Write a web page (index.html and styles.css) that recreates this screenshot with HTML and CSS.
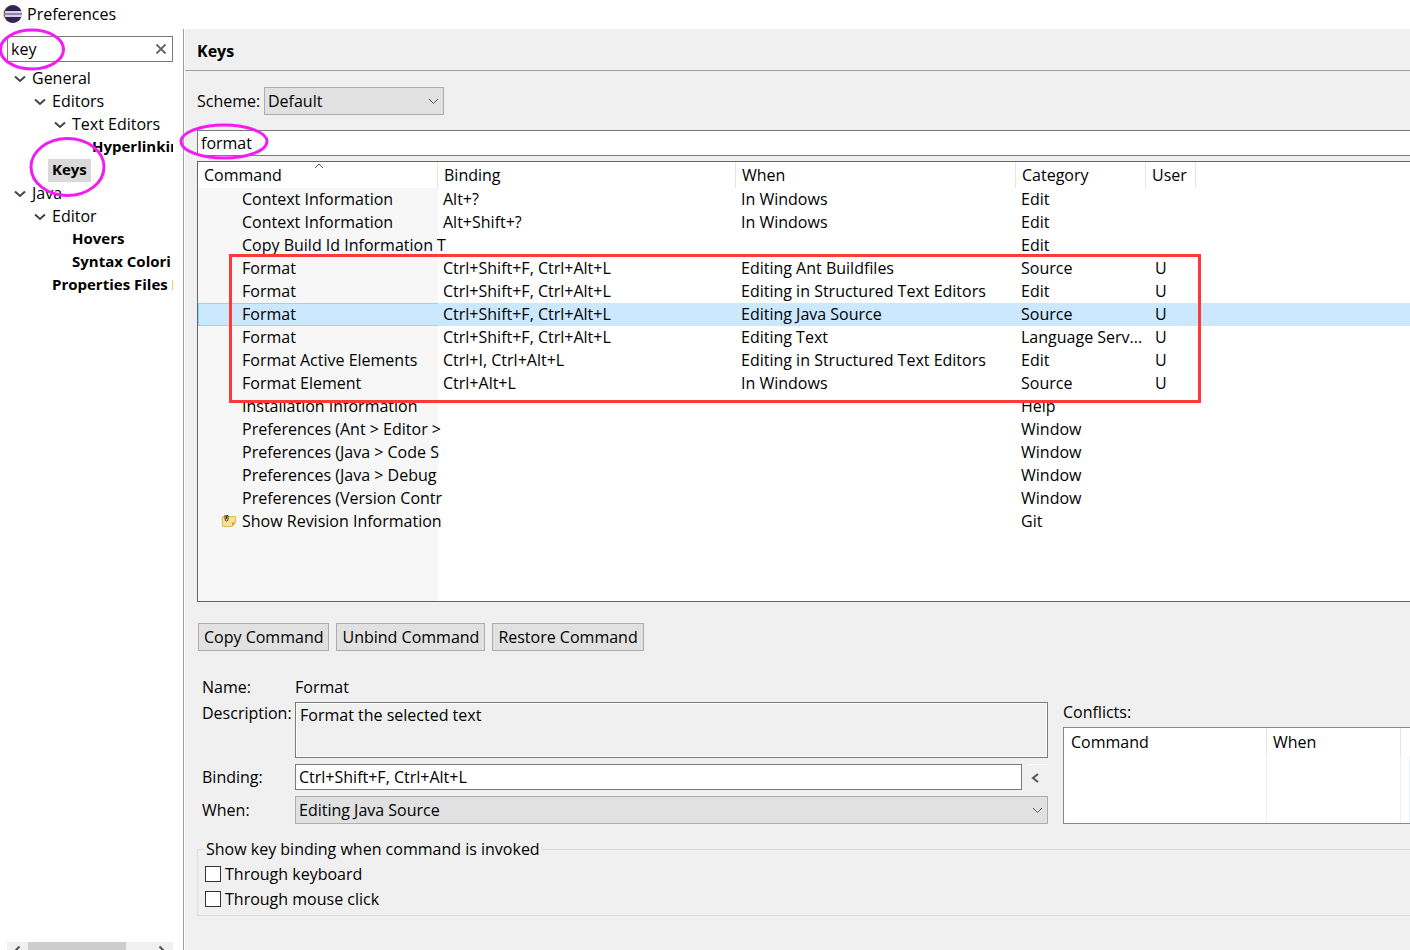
FILE: index.html
```html
<!DOCTYPE html>
<html lang="en">
<head>
  <meta charset="UTF-8" />
  <meta name="viewport" content="width=device-width, initial-scale=1.0"/>
  <title>Preferences</title>
  <link rel="stylesheet" href="styles.css">
</head>
<body>
  <header class="titlebar">
    <svg class="logo" width="20" height="20" viewBox="0 0 20 20">
      <circle cx="10" cy="10" r="9" fill="#f3b57a"/>
      <circle cx="11" cy="10" r="9" fill="#2f2459"/>
      <path d="M3 8h17M3 12h17" stroke="#d5d2e2" stroke-width="2"/>
      <path d="M2 10h18" stroke="#8d87ae" stroke-width="2"/>
    </svg>
    <span>Preferences</span>
  </header>

  <div class="window">
    <aside class="sidebar">
      <div class="search">
        <input type="text" aria-label="Filter preferences" value="key">
        <button class="clear" aria-label="Clear">
          <svg width="12" height="12" viewBox="0 0 12 12"><path d="M1.500 1.500l9 9M10.500 1.500l-9 9" stroke="#666" stroke-width="1.800"/></svg>
        </button>
      </div>

      <ul class="tree">
        <li>
          <div class="node"><button class="twisty" aria-label="Collapse General"><svg width="12" height="8" viewBox="0 0 12 8"><path d="M1 1.5l5 4.5 5-4.5"/></svg></button><span>General</span></div>
          <ul>
            <li>
              <div class="node"><button class="twisty" aria-label="Collapse Editors"><svg width="12" height="8" viewBox="0 0 12 8"><path d="M1 1.5l5 4.5 5-4.5"/></svg></button><span>Editors</span></div>
              <ul>
                <li>
                  <div class="node"><button class="twisty" aria-label="Collapse Text Editors"><svg width="12" height="8" viewBox="0 0 12 8"><path d="M1 1.5l5 4.5 5-4.5"/></svg></button><span>Text Editors</span></div>
                  <ul>
                    <li><div class="node leaf"><span>Hyperlinkin</span></div></li>
                  </ul>
                </li>
              </ul>
            </li>
            <li><div class="node leaf"><span class="current">Keys</span></div></li>
          </ul>
        </li>
        <li>
          <div class="node"><button class="twisty" aria-label="Collapse Java"><svg width="12" height="8" viewBox="0 0 12 8"><path d="M1 1.5l5 4.5 5-4.5"/></svg></button><span>Java</span></div>
          <ul>
            <li>
              <div class="node"><button class="twisty" aria-label="Collapse Editor"><svg width="12" height="8" viewBox="0 0 12 8"><path d="M1 1.5l5 4.5 5-4.5"/></svg></button><span>Editor</span></div>
              <ul>
                <li><div class="node leaf"><span>Hovers</span></div></li>
                <li><div class="node leaf"><span>Syntax Colori</span></div></li>
              </ul>
            </li>
            <li><div class="node leaf"><span>Properties Files E</span></div></li>
          </ul>
        </li>
      </ul>

      <div class="scrollbar">
        <svg width="21" height="17" viewBox="0 0 21 17"><path d="M12.5 4.5l-4 4 4 4" /></svg>
        <div class="thumb"></div>
        <svg width="21" height="17" viewBox="0 0 21 17"><path d="M7.500 4.500l4 4-4 4" /></svg>
      </div>
    </aside>

    <main class="page">
      <h1>Keys</h1>

      <div class="content">
        <div class="scheme">
          <label for="scheme">Scheme:</label>
          <div class="combo">
            <select id="scheme"><option>Default</option></select>
            <svg width="11" height="7" viewBox="0 0 11 7"><path d="M1 1l4.500 4.500 4.500-4.500"/></svg>
          </div>
        </div>

        <input class="filter" type="text" aria-label="Filter commands" value="format">

        <div class="bindings">
          <table>
            <colgroup>
              <col class="c-command"><col class="c-binding"><col class="c-when"><col class="c-category"><col class="c-user"><col>
            </colgroup>
            <thead>
              <tr>
                <th>Command<svg class="sort" width="10" height="6" viewBox="0 0 10 6"><path d="M1 5l4-4 4 4"/></svg></th>
                <th>Binding</th><th>When</th><th>Category</th><th>User</th><th class="rest"></th>
              </tr>
            </thead>
            <tbody>
              <tr><td>Context Information</td><td>Alt+?</td><td>In Windows</td><td>Edit</td><td></td><td></td></tr>
              <tr><td>Context Information</td><td>Alt+Shift+?</td><td>In Windows</td><td>Edit</td><td></td><td></td></tr>
              <tr><td>Copy Build Id Information T</td><td></td><td></td><td>Edit</td><td></td><td></td></tr>
              <tr><td>Format</td><td>Ctrl+Shift+F, Ctrl+Alt+L</td><td>Editing Ant Buildfiles</td><td>Source</td><td>U</td><td></td></tr>
              <tr><td>Format</td><td>Ctrl+Shift+F, Ctrl+Alt+L</td><td>Editing in Structured Text Editors</td><td>Edit</td><td>U</td><td></td></tr>
              <tr class="selected"><td>Format</td><td>Ctrl+Shift+F, Ctrl+Alt+L</td><td>Editing Java Source</td><td>Source</td><td>U</td><td></td></tr>
              <tr><td>Format</td><td>Ctrl+Shift+F, Ctrl+Alt+L</td><td>Editing Text</td><td>Language Serv...</td><td>U</td><td></td></tr>
              <tr><td>Format Active Elements</td><td>Ctrl+I, Ctrl+Alt+L</td><td>Editing in Structured Text Editors</td><td>Edit</td><td>U</td><td></td></tr>
              <tr><td>Format Element</td><td>Ctrl+Alt+L</td><td>In Windows</td><td>Source</td><td>U</td><td></td></tr>
              <tr><td>Installation Information</td><td></td><td></td><td>Help</td><td></td><td></td></tr>
              <tr><td>Preferences (Ant &gt; Editor &gt;</td><td></td><td></td><td>Window</td><td></td><td></td></tr>
              <tr><td>Preferences (Java &gt; Code S</td><td></td><td></td><td>Window</td><td></td><td></td></tr>
              <tr><td>Preferences (Java &gt; Debug</td><td></td><td></td><td>Window</td><td></td><td></td></tr>
              <tr><td>Preferences (Version Contr</td><td></td><td></td><td>Window</td><td></td><td></td></tr>
              <tr>
                <td class="with-icon">
                  <svg width="14" height="12" viewBox="0 0 14 12">
                    <path d="M.5 1.500h13v6l-3.500 4H.5z" fill="#fbe08f" stroke="#e3b95c"/>
                    <path d="M13.500 7.500h-3.500v4z" fill="#d99b3d"/>
                    <path d="M3 0v3.500q0 2.500 1.500 2.500T6 4V.5H4.500V4" fill="none" stroke="#333"/>
                  </svg>Show Revision Information
                </td><td></td><td></td><td>Git</td><td></td><td></td>
              </tr>
            </tbody>
          </table>
        </div>

        <div class="actions">
          <button>Copy Command</button>
          <button>Unbind Command</button>
          <button>Restore Command</button>
        </div>

        <div class="details">
          <div class="form">
            <span>Name:</span>
            <span>Format</span>

            <label class="top" for="description">Description:</label>
            <textarea id="description" readonly>Format the selected text</textarea>

            <label for="binding">Binding:</label>
            <div class="binding-row">
              <input id="binding" type="text" value="Ctrl+Shift+F, Ctrl+Alt+L">
              <button aria-label="Insert special key">
                <svg width="8" height="10" viewBox="0 0 8 10"><path d="M7 1L2 5l5 4" fill="none" stroke="#555" stroke-width="2"/></svg>
              </button>
            </div>

            <label for="when">When:</label>
            <div class="combo">
              <select id="when"><option>Editing Java Source</option></select>
              <svg width="11" height="7" viewBox="0 0 11 7"><path d="M1 1l4.500 4.500 4.500-4.500"/></svg>
            </div>
          </div>

          <div class="conflicts">
            <span id="conflicts-label">Conflicts:</span>
            <div class="conflicts-box">
              <table aria-labelledby="conflicts-label">
                <colgroup><col class="k-command"><col class="k-when"><col></colgroup>
                <thead><tr><th>Command</th><th>When</th><th class="rest"></th></tr></thead>
                <tbody><tr><td></td><td></td><td class="rest"></td></tr></tbody>
              </table>
            </div>
          </div>
        </div>

        <fieldset>
          <legend>Show key binding when command is invoked</legend>
          <label><input type="checkbox">Through keyboard</label>
          <label><input type="checkbox">Through mouse click</label>
        </fieldset>
      </div>
    </main>
  </div>

  <!-- highlight marks drawn over the dialog -->
  <svg class="marks" width="1210" height="410" viewBox="0 0 1210 410">
    <g fill="none" stroke="#f21cf2" stroke-width="3">
      <ellipse cx="32" cy="49.500" rx="31.500" ry="19.500"/>
      <ellipse cx="67.500" cy="167" rx="36.500" ry="28.500"/>
      <ellipse cx="224" cy="141.500" rx="43" ry="16.500"/>
    </g>
    <rect x="230.500" y="255.500" width="969" height="146" fill="none" stroke="#ff3838" stroke-width="3"/>
  </svg>
</body>
</html>
```

FILE: styles.css
```css
* {
  box-sizing: border-box;
}

body {
  margin: 0;
  height: 100vh;
  display: flex;
  flex-direction: column;
  overflow: hidden;
  background: #fff;
  color: #000;
  font-family: 'Open Sans', 'Noto Sans', sans-serif;
  font-size: 16px;
  line-height: 22px;
}

input, select, textarea, button {
  font: inherit;
  color: inherit;
  border-radius: 0;
  margin: 0;
}

.titlebar {
  height: 29px;
  display: flex;
  align-items: center;
  gap: 5px;
  padding: 0 2px 1px;
}

.window {
  flex: 1;
  display: flex;
  min-height: 0;
}

/* left side */
.sidebar {
  width: 184px;
  flex: none;
  display: flex;
  flex-direction: column;
  padding: 7px 10px 0 7px;
  border-right: 1px solid #a0a0a0;
}

.search {
  display: flex;
  height: 26px;
  border: 1px solid #7a7a7a;
}

.search input {
  flex: 1;
  min-width: 0;
  border: none;
  padding: 0 3px;
  background: none;
}

.clear {
  width: 22px;
  padding: 0;
  border: none;
  background: none;
  line-height: 0;
}

.tree {
  flex: 1;
  overflow: hidden;
  padding: 5px 0 0 5px;
}

.tree, .tree ul {
  list-style: none;
  margin: 0;
}

.tree ul {
  padding: 0 0 0 20px;
}

.node {
  display: flex;
  height: 23px;
  white-space: nowrap;
}

.node span {
  padding: 0 4px;
}

.leaf {
  padding-left: 16px;
  font-size: 15px;
  line-height: 20px;
  font-weight: bold;
}

.current {
  background: #d9d9d9;
}

.twisty {
  width: 16px;
  flex: none;
  padding: 0;
  border: none;
  background: none;
  line-height: 0;
}

.twisty path {
  fill: none;
  stroke: #444;
  stroke-width: 2;
}

.scrollbar {
  display: flex;
  height: 8px;
  overflow: hidden;
  background: #f0f0f0;
}

.scrollbar path {
  fill: none;
  stroke: #505050;
  stroke-width: 2;
}

.thumb {
  width: 98px;
  margin-right: auto;
  background: #cdcdcd;
}

/* right side */
.page {
  flex: 1;
  min-width: 0;
  margin-left: 1px;
  background: #f0f0f0;
}

h1 {
  margin: 0;
  padding: 11px 12px 8px;
  font-size: 16px;
  line-height: 22px;
  border-bottom: 1px solid #a0a0a0;
}

.content {
  padding: 16px 0 0 12px;
}

.scheme {
  display: flex;
  align-items: center;
}

.scheme label {
  width: 67px;
}

.scheme .combo {
  width: 180px;
}

.combo {
  position: relative;
}

.combo select {
  display: block;
  width: 100%;
  height: 28px;
  padding: 0 24px 0 3px;
  appearance: none;
  border: 1px solid #adadad;
  background: #e1e1e1;
}

.combo svg {
  position: absolute;
  right: 5px;
  top: 11px;
  pointer-events: none;
}

.combo path, .sort path {
  fill: none;
  stroke: #555;
}

.filter {
  display: block;
  width: 100%;
  height: 26px;
  margin: 15px 0 5px;
  padding: 0 3px;
  border: 1px solid #7a7a7a;
  border-right: none;
  background: #fff;
}

table {
  width: 100%;
  table-layout: fixed;
  border-collapse: separate;
  border-spacing: 0;
}

th {
  text-align: left;
  font-weight: normal;
  padding: 0 6px;
  border-right: 1px solid #e5e5e5;
}

th.rest, td.rest {
  border-right: none;
}

.bindings {
  height: 441px;
  border: 1px solid #646464;
  border-right: none;
  background: linear-gradient(to right, #f7f7f7 240px, #fff 240px);
}

.bindings th {
  position: relative;
  height: 26px;
  background: #fff;
}

.sort {
  position: absolute;
  left: 50%;
  top: 1px;
  margin-left: -4px;
}

.bindings td {
  height: 23px;
  padding: 0 0 0 5px;
  vertical-align: top;
  white-space: nowrap;
}

.bindings td:first-child {
  padding-left: 44px;
}

.bindings td:nth-child(5) {
  padding-left: 9px;
}

.bindings td.with-icon {
  padding-left: 24px;
}

.with-icon svg {
  margin-right: 6px;
}

.selected td {
  background: #cce8ff;
}

.selected td:first-child {
  box-shadow: inset 1px 1px #99d1ff, inset 0 -1px #99d1ff;
}

.c-command { width: 240px; }
.c-binding { width: 298px; }
.c-when { width: 280px; }
.c-category { width: 130px; }
.c-user { width: 50px; }

.actions {
  display: flex;
  gap: 7px;
  padding: 21px 0 0 1px;
}

.actions button {
  height: 28px;
  padding: 0 5px;
  border: 1px solid #adadad;
  background: #e1e1e1;
}

.details {
  display: grid;
  grid-template-columns: 39fr 16fr;
  gap: 15px;
  padding: 25px 0 0 5px;
}

.form {
  display: grid;
  grid-template-columns: 88px 1fr;
  row-gap: 6px;
  column-gap: 5px;
  align-items: center;
}

.form .top {
  align-self: start;
}

.form textarea {
  display: block;
  width: 100%;
  height: 56px;
  padding: 1px 4px;
  resize: none;
  border: 1px solid #7a7a7a;
  background: #f0f0f0;
  box-shadow: inset 0 0 0 1px #fff;
}

.form > :nth-child(-n+2) {
  height: 20px;
}

.binding-row {
  display: flex;
  gap: 5px;
}

.binding-row input {
  flex: 1;
  min-width: 0;
  height: 26px;
  padding: 0 3px;
  border: 1px solid #7a7a7a;
  background: #fff;
}

.binding-row button {
  width: 21px;
  padding: 0 4px 0 0;
  border: none;
  border-top: 1px solid #fff;
  background: none;
  line-height: 0;
}

.conflicts {
  display: flex;
  flex-direction: column;
  padding-top: 25px;
}

.conflicts-box {
  flex: 1;
  display: flex;
  margin-top: 4px;
  border: 1px solid #828790;
  border-right: none;
  background: #fff;
}

.conflicts th {
  height: 28px;
  padding: 0 6px;
}

.conflicts th:first-child {
  padding-left: 7px;
}

.conflicts td {
  border-right: 1px solid #e8f1fb;
}

.k-command { width: 203px; }
.k-when { width: 134px; }

fieldset {
  margin: 14px 0 0;
  padding: 1px 7px 4px;
  border: 1px solid #dcdcdc;
  border-right: none;
}

legend {
  padding: 0 1px;
}

fieldset label {
  display: flex;
  align-items: center;
  gap: 4px;
  height: 25px;
}

fieldset input {
  appearance: none;
  width: 16px;
  height: 16px;
  border: 1px solid #333;
  background: #fff;
}

.marks {
  position: absolute;
  left: 0;
  top: 0;
  pointer-events: none;
}
```
